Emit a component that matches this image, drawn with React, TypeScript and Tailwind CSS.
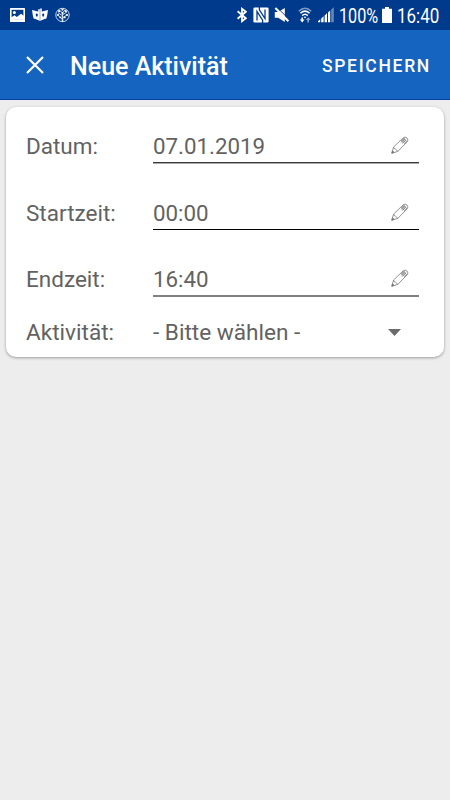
import React from "react";

const fields = [
  { label: "Datum:", value: "07.01.2019", line: "h-[2px] bg-gradient-to-b from-[#3a3a3a] from-50% to-[#a9a9a9] to-50%", gap: "mb-[10px]" },
  { label: "Startzeit:", value: "00:00", line: "h-px bg-black", gap: "mb-[9px]" },
  { label: "Endzeit:", value: "16:40", line: "h-[2px] bg-[#808080]", gap: "" },
];

const PictureIcon = () => (
  <svg width="15" height="14" viewBox="0 0 15 14">
    <rect width="15" height="14" rx="0.6" fill="#fff" />
    <rect x="1.6" y="1.8" width="11.8" height="9.4" fill="#003a8c" />
    <circle cx="4.4" cy="4.6" r="1.5" fill="#fff" />
    <path d="M1 11.6V9.6L4.6 7.2 6.8 9 11 5.8 14 8V11.6Z" fill="#fff" />
  </svg>
);

const MaskIcon = () => (
  <svg width="16" height="14" viewBox="0 0 16 14">
    <path
      d="M0 2 5 3.2Q6 3.2 6.2 4V1.2H7.8V13Q5 11 1.6 10.4 .6 7 0 2Z"
      fill="#fff"
    />
    <path
      d="M16 2 11 3.2Q10 3.2 9.8 4V.4H8.2V13Q11 11 14.4 10.4 15.4 7 16 2Z"
      fill="#fff"
    />
    <rect x="3.9" y="5.4" width="1.8" height="3.2" rx="0.9" fill="#003a8c" />
    <rect x="10.3" y="5.4" width="1.8" height="3.2" rx="0.9" fill="#003a8c" />
  </svg>
);

const GlobeIcon = () => (
  <svg width="15" height="16" viewBox="0 0 15 16" fill="none" stroke="#dbe5f4" strokeWidth="0.9">
    <circle cx="7.5" cy="8" r="6.7" />
    <path d="M7.5 15V5M7.5 12 3.4 8.8M7.5 11l4-2.8M3 5.6l4.5 3.2M11.8 5 7.5 8M4.6 3.4l3 2.4L10 3" />
    <path d="M7.5 14.6V9" strokeWidth="1.6" />
    <g fill="#fff" stroke="none">
      <circle cx="7.5" cy="2.6" r="1.1" />
      <circle cx="4.2" cy="4.2" r="1.1" />
      <circle cx="10.8" cy="4.2" r="1.1" />
      <circle cx="3" cy="8" r="1.1" />
      <circle cx="12" cy="8" r="1.1" />
      <circle cx="7.5" cy="6" r="1.1" />
      <circle cx="5.2" cy="10.4" r="0.9" />
      <circle cx="9.8" cy="10.4" r="0.9" />
    </g>
  </svg>
);

const BluetoothIcon = () => (
  <svg width="11" height="16" viewBox="0 0 11 16" fill="none" stroke="#fff" strokeWidth="1.8">
    <path d="M1.6 4.2 9.8 11.2 6 14.2V1.8L9.8 4.8 1.6 11.8" />
  </svg>
);

const NfcIcon = () => (
  <svg width="16" height="16" viewBox="0 0 16 16">
    <rect x="0.4" y="0.4" width="15.2" height="15.2" rx="1.4" fill="#fff" />
    <path d="M4 13.6V4.4L9.6 13.2V16M12 2.4V11.6L6.4 2.8V0" fill="none" stroke="#003a8c" strokeWidth="1.3" />
  </svg>
);

const MuteIcon = () => (
  <svg width="16" height="16" viewBox="0 0 16 16">
    <path d="M.8 5H4.2L10.8.9V15L4.2 10.8H.8Z" fill="#fff" />
    <path d="M3 .4 15.6 13" stroke="#003a8c" strokeWidth="1" />
    <path d="M1.4 1 14.4 14.2" stroke="#fff" strokeWidth="2.1" />
  </svg>
);

const WifiIcon = () => (
  <svg width="14" height="16" viewBox="0 0 14 16">
    <g fill="none" strokeWidth="1.5">
      <path d="M.8 4.2Q7-1.6 13.2 4.2" stroke="#7f9cc5" />
      <path d="M2.4 6.3Q7 2 11.6 6.3" stroke="#fff" />
      <path d="M4.2 8.6Q7 6 9.8 8.6" stroke="#fff" />
    </g>
    <path d="M7 11.2 5.6 9.9Q7 9 8.4 9.9Z" fill="#fff" />
    <path d="M5 10.4v2H6.6L4.2 15.4 1.8 12.4H3.4v-2Z" fill="#fff" />
    <path d="M9.4 15.4V13H7.8L10.2 10.2 12.6 13H11v2.4Z" fill="#8ba6cb" />
  </svg>
);

const SignalIcon = () => (
  <svg width="16" height="16" viewBox="0 0 16 16">
    <path d="M0 15.2V14.2L2.2 12.2v3ZM3.2 15.2V11.4L5.6 9.2v6ZM6.6 15.2V8.4L9 6.2v9ZM10 15.2V5.4L12.2 3.4v11.8Z" fill="#fff" />
    <path d="M13.2 15.2V2.4L15.8.2V15.2Z" fill="#6689bb" />
  </svg>
);

const BatteryIcon = () => (
  <svg width="10" height="16" viewBox="0 0 10 16">
    <path d="M3 0H7V1.8H10V16H0V1.8H3Z" fill="#fff" />
  </svg>
);

const PencilIcon = () => (
  <svg width="18" height="18" viewBox="0 0 18 18" fill="none" stroke="#777" strokeWidth="0.8">
    <path d="M.8 17.2 2.6 11 12.2 1.8Q14 .2 16 2 17.8 4 16.2 5.8L6.8 15.4Z" />
    <path d="M2.6 11Q3 13 4.5 13.2 5.2 13.4 6.8 15.4M10.2 4l4 4M11.2 3l4 4M12.2 2l4 4M10.8 7.6 15 3.6M9.8 6.4 14 2.4" />
    <path d="m.8 17.2.8-2.4 1.5 1.6Z" fill="#777" />
  </svg>
);

const StatusBar = () => (
  <div className="flex h-[30px] items-center justify-between bg-[#003a8c] pl-[10px] pr-[11px]">
    <div className="flex items-center gap-[7px]">
      <PictureIcon />
      <MaskIcon />
      <GlobeIcon />
    </div>
    <div className="flex items-center">
      <div className="flex items-center">
        <BluetoothIcon />
        <div className="ml-[6px]"><NfcIcon /></div>
        <div className="ml-[5px]"><MuteIcon /></div>
        <div className="ml-[8px]"><WifiIcon /></div>
        <div className="ml-[6px]"><SignalIcon /></div>
      </div>
      <div className="ml-[5px] mt-[2px] w-[41px] whitespace-nowrap text-[20px] leading-[30px]">
        <span className="inline-block origin-left scale-x-[0.81]">100%</span>
      </div>
      <div className="ml-[2px]"><BatteryIcon /></div>
      <div className="ml-[5px] mt-[2px] w-[42px] whitespace-nowrap text-[20px] leading-[30px]">
        <span className="inline-block origin-left scale-x-[0.85]">16:40</span>
      </div>
    </div>
  </div>
);

const App = () => (
  <div className="h-[800px] w-[450px] overflow-hidden bg-[#ededed] font-['Roboto',sans-serif] text-white">
    <StatusBar />
    <header className="flex h-[70px] items-center border-b border-[#003f9e] bg-[#1565c0] pl-[26px] pr-[19px]">
      <button aria-label="Schließen">
        <svg width="18" height="18" viewBox="0 0 18 18" fill="none" stroke="#fff" strokeWidth="2.2">
          <path d="M1 1 17 17M17 1 1 17" />
        </svg>
      </button>
      <h1 className="ml-[26px] mt-[5px] whitespace-nowrap text-[25px] font-medium">Neue Aktivität</h1>
      <button className="ml-auto mt-[4px] text-[17.5px] font-medium tracking-[1.7px]">SPEICHERN</button>
    </header>
    <main className="mx-[6px] mt-[7px] h-[250px] rounded-[10px] bg-white pl-[20px] pr-[25px] text-[#626262] shadow-[0_1px_3px_rgba(0,0,0,0.35)]">
      {fields.map((field) => (
        <div key={field.label} className={`flex h-[57px] ${field.gap}`}>
          <div className="w-[127px] pt-[22px] text-[22.5px] leading-[34px]">{field.label}</div>
          <div className="flex flex-1 flex-col">
            <div className="flex h-[55px] justify-between pt-[22px] text-[22.3px] leading-[34px]">
              <span>{field.value}</span>
              <div className="mr-[10px] mt-[7px]"><PencilIcon /></div>
            </div>
            <div className={field.line}></div>
          </div>
        </div>
      ))}
      <div className="flex h-[53px] items-end text-[22.6px] leading-[34px]">
        <div className="w-[127px]">Aktivität:</div>
        <div className="flex flex-1 items-center justify-between">
          <span>- Bitte wählen -</span>
          <svg className="mb-[2px] mr-[18px]" width="13" height="7" viewBox="0 0 13 7">
            <path d="M0 0H13L6.5 7Z" fill="#6b6b6b" />
          </svg>
        </div>
      </div>
    </main>
  </div>
);

export default App;
